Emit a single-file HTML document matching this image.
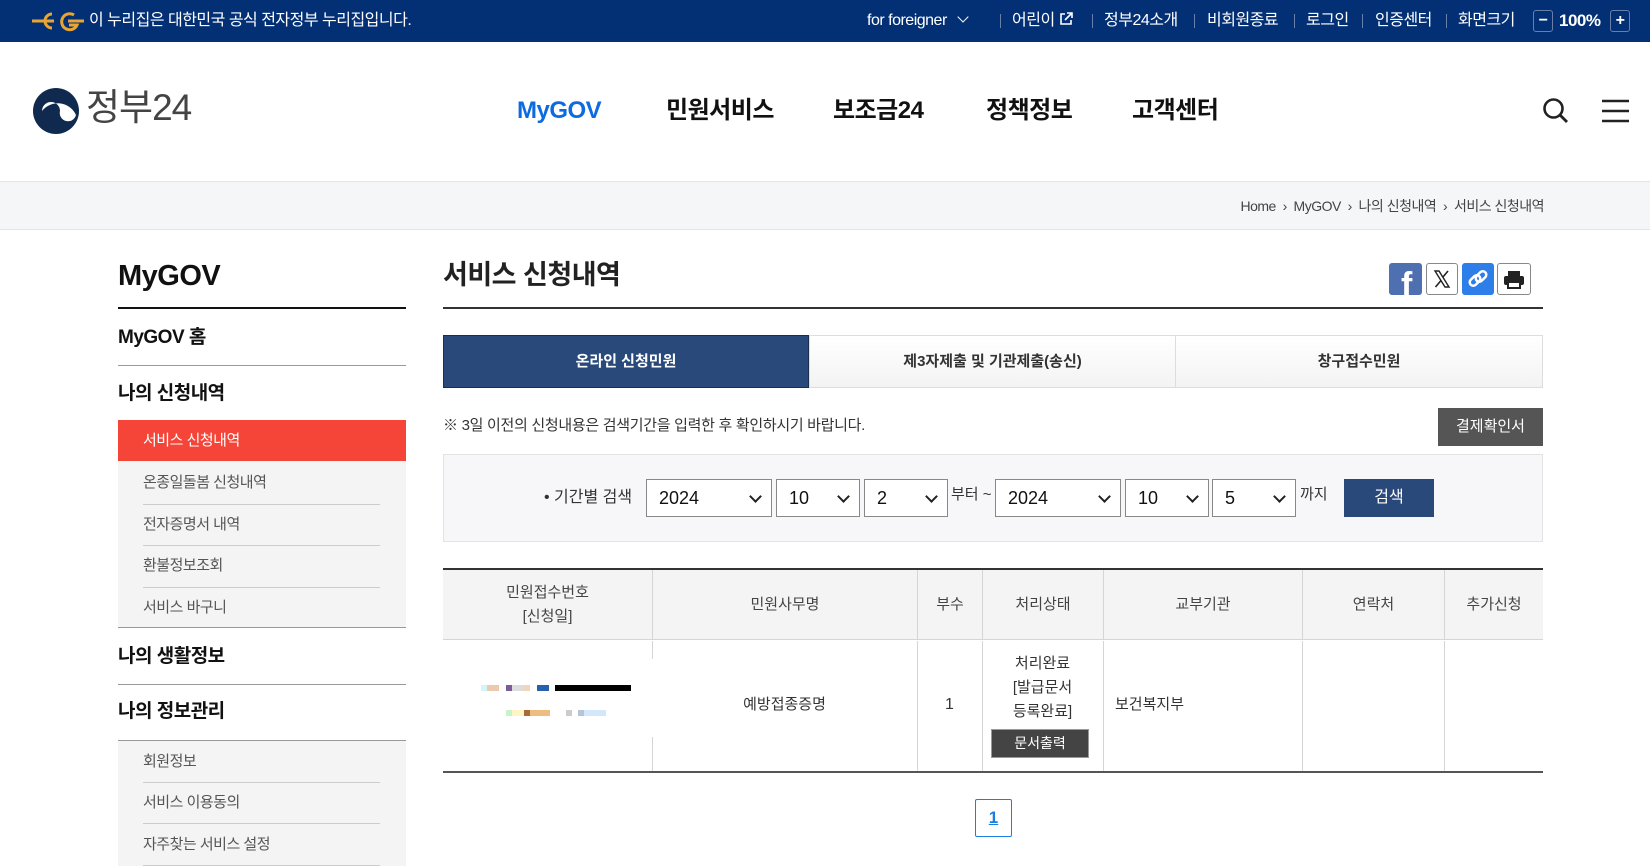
<!DOCTYPE html>
<html><head><meta charset="utf-8">
<style>
*{margin:0;padding:0;box-sizing:border-box}
body{width:1650px;height:866px;overflow:hidden;background:#fff;font-family:"Liberation Sans","Noto Sans CJK KR",sans-serif;color:#222;position:relative}
.a{position:absolute;white-space:nowrap}
.top{position:absolute;left:0;top:0;width:1650px;height:42px;background:#033075;color:#fff}
.top .a{font-size:16px;top:10px;line-height:22px;letter-spacing:-0.5px}
.sep{position:absolute;top:14px;width:1px;height:14px;background:#6a7fa8}
.nav{font-size:24px;font-weight:bold;top:96px;line-height:30px;color:#111;letter-spacing:-0.5px}
.bc{position:absolute;left:0;top:181px;width:1650px;height:49px;background:#f5f6f8;border-top:1px solid #e4e4e4;border-bottom:1px solid #e4e4e4}
.sh{font-size:19px;font-weight:bold;color:#111;letter-spacing:-0.5px;line-height:26px}
.sub{font-size:15px;color:#555;letter-spacing:-0.5px;line-height:22px}
.sel{position:absolute;top:479px;height:38px;border:1px solid #888;background:#fff;font-size:18px;line-height:22px;padding:7px 0 0 12px;color:#111}
.sel:after{content:"";position:absolute;right:11px;top:12px;width:7px;height:7px;border-right:2px solid #222;border-bottom:2px solid #222;transform:rotate(45deg)}
.th{position:absolute;top:570px;height:70px;font-size:15px;color:#444;text-align:center;display:flex;align-items:center;justify-content:center;line-height:24px;border-left:1px solid #d5d5d5}
.vl{position:absolute;width:1px;background:#d5d5d5}
</style></head><body>
<div class="top">
 <svg class="a" style="left:30px;top:10px" width="56" height="22" viewBox="0 0 56 22"><path d="M2 11h14M22 4a7 7 0 1 0 0 14 M14 11h10" stroke="#e9a531" stroke-width="3" fill="none"/><path d="M44 5a8 8 0 1 0 3 10h-8M38 11h16" stroke="#e9a531" stroke-width="3" fill="none"/></svg>
 <div class="a" style="left:89px">이 누리집은 대한민국 공식 전자정부 누리집입니다.</div>
 <div class="a" style="left:867px">for foreigner <span style="display:inline-block;width:8px;height:8px;border-right:1.5px solid #fff;border-bottom:1.5px solid #fff;transform:rotate(45deg);margin:0 6px 4px 8px"></span></div>
 <div class="sep" style="left:1000px"></div>
 <div class="a" style="left:1012px">어린이 <svg width="14" height="14" viewBox="0 0 14 14" style="vertical-align:-1px"><path d="M6 2H2v10h10V8M8 1h5v5M13 1L6 8" fill="none" stroke="#fff" stroke-width="1.6"/></svg></div>
 <div class="sep" style="left:1092px"></div>
 <div class="a" style="left:1104px">정부24소개</div>
 <div class="sep" style="left:1194px"></div>
 <div class="a" style="left:1207px">비회원종료</div>
 <div class="sep" style="left:1294px"></div>
 <div class="a" style="left:1306px">로그인</div>
 <div class="sep" style="left:1362px"></div>
 <div class="a" style="left:1375px">인증센터</div>
 <div class="sep" style="left:1446px"></div>
 <div class="a" style="left:1458px">화면크기</div>
 <div class="a" style="left:1533px;top:10px;width:20px;height:22px;border:1px solid #6a7fa8;border-radius:3px;text-align:center;line-height:19px;font-weight:bold">−</div>
 <div class="a" style="left:1559px;font-weight:bold;font-size:17px">100%</div>
 <div class="a" style="left:1610px;top:10px;width:20px;height:22px;border:1px solid #6a7fa8;border-radius:3px;text-align:center;line-height:19px;font-weight:bold">+</div>
</div>
<!-- header -->
<svg class="a" style="left:32px;top:87px" width="48" height="48" viewBox="0 0 48 48"><circle cx="24" cy="24" r="23" fill="#0f2a4e"/><path d="M44 30A21 21 0 0 0 8 9A21 21 0 0 1 44 30z" fill="#d8142b"/><path d="M10 24a9 9 0 0 1 18 0a8 8 0 0 0 16 4A20 20 0 0 0 10 24z" fill="#fff"/></svg>
<div class="a" style="left:86px;top:86px;font-size:37px;line-height:44px;color:#444;letter-spacing:-1px">정부24</div>
<div class="a nav" style="left:517px;color:#0d6be0">MyGOV</div>
<div class="a nav" style="left:666px">민원서비스</div>
<div class="a nav" style="left:833px">보조금24</div>
<div class="a nav" style="left:986px">정책정보</div>
<div class="a nav" style="left:1132px">고객센터</div>
<svg class="a" style="left:1542px;top:97px" width="28" height="28" viewBox="0 0 28 28"><circle cx="11.5" cy="11.5" r="9" fill="none" stroke="#222" stroke-width="2.6"/><path d="M18 18l7 7" stroke="#222" stroke-width="2.8"/></svg>
<svg class="a" style="left:1602px;top:99px" width="27" height="24" viewBox="0 0 27 24"><path d="M0 2h27M0 12h27M0 22h27" stroke="#222" stroke-width="2.6"/></svg>
<div class="bc"><div class="a" style="right:106px;top:14px;font-size:14px;line-height:20px;color:#444;letter-spacing:-0.5px">Home &nbsp;›&nbsp; MyGOV &nbsp;›&nbsp; 나의 신청내역 &nbsp;›&nbsp; 서비스 신청내역</div></div>
<!-- sidebar -->
<div class="a" style="left:118px;top:258px;font-size:29px;line-height:36px;font-weight:bold;color:#111;letter-spacing:-0.5px">MyGOV</div>
<div class="a" style="left:118px;top:307px;width:288px;height:2px;background:#111"></div>
<div class="a sh" style="left:118px;top:325px">MyGOV 홈</div>
<div class="a" style="left:118px;top:365px;width:288px;height:1px;background:#999"></div>
<div class="a sh" style="left:118px;top:381px">나의 신청내역</div>
<div class="a" style="left:118px;top:420px;width:288px;height:208px;background:#f4f4f4;border-top:1px solid #999;border-bottom:1px solid #999"></div>
<div class="a" style="left:118px;top:420px;width:288px;height:41px;background:#f54438"></div>
<div class="a sub" style="left:143px;top:430px;color:#fff">서비스 신청내역</div>
<div class="a sub" style="left:143px;top:472px">온종일돌봄 신청내역</div>
<div class="a sub" style="left:143px;top:514px">전자증명서 내역</div>
<div class="a sub" style="left:143px;top:555px">환불정보조회</div>
<div class="a sub" style="left:143px;top:597px">서비스 바구니</div>
<div class="a" style="left:143px;top:504px;width:237px;height:1px;background:#ccc"></div>
<div class="a" style="left:143px;top:545px;width:237px;height:1px;background:#ccc"></div>
<div class="a" style="left:143px;top:587px;width:237px;height:1px;background:#ccc"></div>
<div class="a sh" style="left:118px;top:644px">나의 생활정보</div>
<div class="a" style="left:118px;top:684px;width:288px;height:1px;background:#999"></div>
<div class="a sh" style="left:118px;top:699px">나의 정보관리</div>
<div class="a" style="left:118px;top:740px;width:288px;height:126px;background:#f4f4f4;border-top:1px solid #999"></div>
<div class="a sub" style="left:143px;top:751px">회원정보</div>
<div class="a sub" style="left:143px;top:792px">서비스 이용동의</div>
<div class="a sub" style="left:143px;top:834px">자주찾는 서비스 설정</div>
<div class="a" style="left:143px;top:782px;width:237px;height:1px;background:#ccc"></div>
<div class="a" style="left:143px;top:823px;width:237px;height:1px;background:#ccc"></div>
<div class="a" style="left:143px;top:865px;width:237px;height:1px;background:#ccc"></div>
<!-- content -->
<div class="a" style="left:443px;top:258px;font-size:27px;line-height:34px;font-weight:bold;color:#222;letter-spacing:-0.5px">서비스 신청내역</div>
<div class="a" style="left:443px;top:307px;width:1100px;height:2px;background:#333"></div>
<div class="a" style="left:1389px;top:263px;width:33px;height:32px;background:#4e6fb0;border-radius:3px;overflow:hidden"><div style="position:absolute;left:12px;top:5px;color:#fff;font-size:34px;font-weight:bold;line-height:34px">f</div></div>
<div class="a" style="left:1426px;top:263px;width:32px;height:32px;border:1px solid #888;border-radius:3px"><svg width="30" height="30" viewBox="0 0 30 30"><path d="M8 7h4l10 16h-4z" fill="none" stroke="#222" stroke-width="1.4"/><path d="M21 7l-5.5 6.5M14 16.5L8.5 23" stroke="#222" stroke-width="1.6"/></svg></div>
<div class="a" style="left:1462px;top:263px;width:32px;height:32px;background:#2d7ee8;border-radius:3px"><svg width="32" height="32" viewBox="0 0 32 32"><g fill="none" stroke="#fff" stroke-width="2.5"><rect x="7" y="14" width="12" height="7" rx="3.5" transform="rotate(-45 13 17.5)"/><rect x="13" y="10" width="12" height="7" rx="3.5" transform="rotate(-45 19 13.5)"/></g></svg></div>
<div class="a" style="left:1497px;top:263px;width:34px;height:32px;border:1px solid #888;border-radius:3px"><svg width="32" height="30" viewBox="0 0 32 30"><rect x="10" y="7" width="12" height="6" fill="#222"/><rect x="6" y="12" width="20" height="9" rx="2" fill="#222"/><rect x="10" y="18" width="12" height="6" fill="#fff" stroke="#222" stroke-width="2"/></svg></div>
<!-- tabs -->
<div class="a" style="left:443px;top:335px;width:366px;height:53px;background:#29497a;border:1px solid #1b2f52;color:#fff;font-size:15px;font-weight:bold;text-align:center;line-height:51px">온라인 신청민원</div>
<div class="a" style="left:809px;top:335px;width:367px;height:53px;background:linear-gradient(#fff,#f3f3f3);border:1px solid #ddd;font-size:15px;font-weight:bold;text-align:center;line-height:51px;color:#333">제3자제출 및 기관제출(송신)</div>
<div class="a" style="left:1175px;top:335px;width:368px;height:53px;background:linear-gradient(#fff,#f3f3f3);border:1px solid #ddd;font-size:15px;font-weight:bold;text-align:center;line-height:51px;color:#333">창구접수민원</div>
<div class="a" style="left:443px;top:415px;font-size:15px;line-height:22px;color:#333;letter-spacing:-0.3px">※ 3일 이전의 신청내용은 검색기간을 입력한 후 확인하시기 바랍니다.</div>
<div class="a" style="left:1438px;top:408px;width:105px;height:38px;background:#555;color:#fff;font-size:15px;text-align:center;line-height:38px">결제확인서</div>
<div class="a" style="left:443px;top:454px;width:1100px;height:88px;background:#f7f7f9;border:1px solid #e3e3e3"></div>
<div class="a" style="left:544px;top:487px;font-size:16px;line-height:22px;color:#333">• 기간별 검색</div>
<div class="sel" style="left:646px;width:126px">2024</div>
<div class="sel" style="left:776px;width:84px">10</div>
<div class="sel" style="left:864px;width:84px">2</div>
<div class="a" style="left:951px;top:484px;font-size:15px;line-height:22px;color:#333">부터 ~</div>
<div class="sel" style="left:995px;width:126px">2024</div>
<div class="sel" style="left:1125px;width:84px">10</div>
<div class="sel" style="left:1212px;width:84px">5</div>
<div class="a" style="left:1300px;top:484px;font-size:15px;line-height:22px;color:#333">까지</div>
<div class="a" style="left:1344px;top:479px;width:90px;height:38px;background:#29497a;color:#fff;font-size:16px;text-align:center;line-height:38px">검색</div>
<!-- table -->
<div class="a" style="left:443px;top:568px;width:1100px;height:2px;background:#333"></div>
<div class="a" style="left:443px;top:570px;width:1100px;height:70px;background:#f4f4f4;border-bottom:1px solid #d5d5d5"></div>
<div class="th" style="left:443px;width:209px;border-left:0">민원접수번호<br>[신청일]</div>
<div class="th" style="left:652px;width:265px">민원사무명</div>
<div class="th" style="left:917px;width:65px">부수</div>
<div class="th" style="left:982px;width:121px">처리상태</div>
<div class="th" style="left:1103px;width:199px">교부기관</div>
<div class="th" style="left:1302px;width:142px">연락처</div>
<div class="th" style="left:1444px;width:99px">추가신청</div>
<div class="vl" style="left:652px;top:641px;height:18px"></div>
<div class="vl" style="left:652px;top:737px;height:35px"></div>
<div class="vl" style="left:917px;top:641px;height:131px"></div>
<div class="vl" style="left:982px;top:641px;height:131px"></div>
<div class="vl" style="left:1103px;top:641px;height:131px"></div>
<div class="vl" style="left:1302px;top:641px;height:131px"></div>
<div class="vl" style="left:1444px;top:641px;height:131px"></div>
<div class="a" style="left:443px;top:771px;width:1100px;height:2px;background:#555"></div>
<div class="a" style="left:481px;top:685px;width:6px;height:6px;background:#d0f6fa"></div>
<div class="a" style="left:487px;top:685px;width:12px;height:6px;background:#ebc8ae"></div>
<div class="a" style="left:506px;top:685px;width:6px;height:6px;background:#7a5d94"></div>
<div class="a" style="left:512px;top:685px;width:17px;height:6px;background:#ddd"></div>
<div class="a" style="left:524px;top:685px;width:6px;height:6px;background:#f2d4b8"></div>
<div class="a" style="left:537px;top:685px;width:12px;height:6px;background:#2561ad"></div>
<div class="a" style="left:555px;top:685px;width:76px;height:6px;background:#000"></div>
<div class="a" style="left:506px;top:710px;width:6px;height:6px;background:#c8f2c8"></div>
<div class="a" style="left:512px;top:710px;width:12px;height:6px;background:#fdf5c5"></div>
<div class="a" style="left:524px;top:710px;width:6px;height:6px;background:#a86a36"></div>
<div class="a" style="left:530px;top:710px;width:20px;height:6px;background:#edbd80"></div>
<div class="a" style="left:566px;top:710px;width:6px;height:6px;background:#ccc"></div>
<div class="a" style="left:578px;top:710px;width:6px;height:6px;background:#b6c4d8"></div>
<div class="a" style="left:584px;top:710px;width:22px;height:6px;background:#d3e7fa"></div>
<div class="a" style="left:652px;top:694px;width:265px;text-align:center;font-size:15px;line-height:22px;color:#333">예방접종증명</div>
<div class="a" style="left:917px;top:694px;width:65px;text-align:center;font-size:16px;line-height:22px;color:#333">1</div>
<div class="a" style="left:982px;top:652px;width:121px;text-align:center;font-size:15px;color:#333;line-height:24px;white-space:normal">처리완료<br>[발급문서<br>등록완료]</div>
<div class="a" style="left:991px;top:729px;width:98px;height:29px;background:#444;color:#fff;font-size:14px;text-align:center;line-height:27px;border:1px solid #999">문서출력</div>
<div class="a" style="left:1115px;top:694px;font-size:15px;line-height:22px;color:#333">보건복지부</div>
<div class="a" style="left:975px;top:799px;width:37px;height:38px;border:1px solid #1a7fe0;border-radius:2px;text-align:center;line-height:36px;font-size:17px;font-weight:bold;color:#1a7fe0;text-decoration:underline">1</div>
</body></html>
